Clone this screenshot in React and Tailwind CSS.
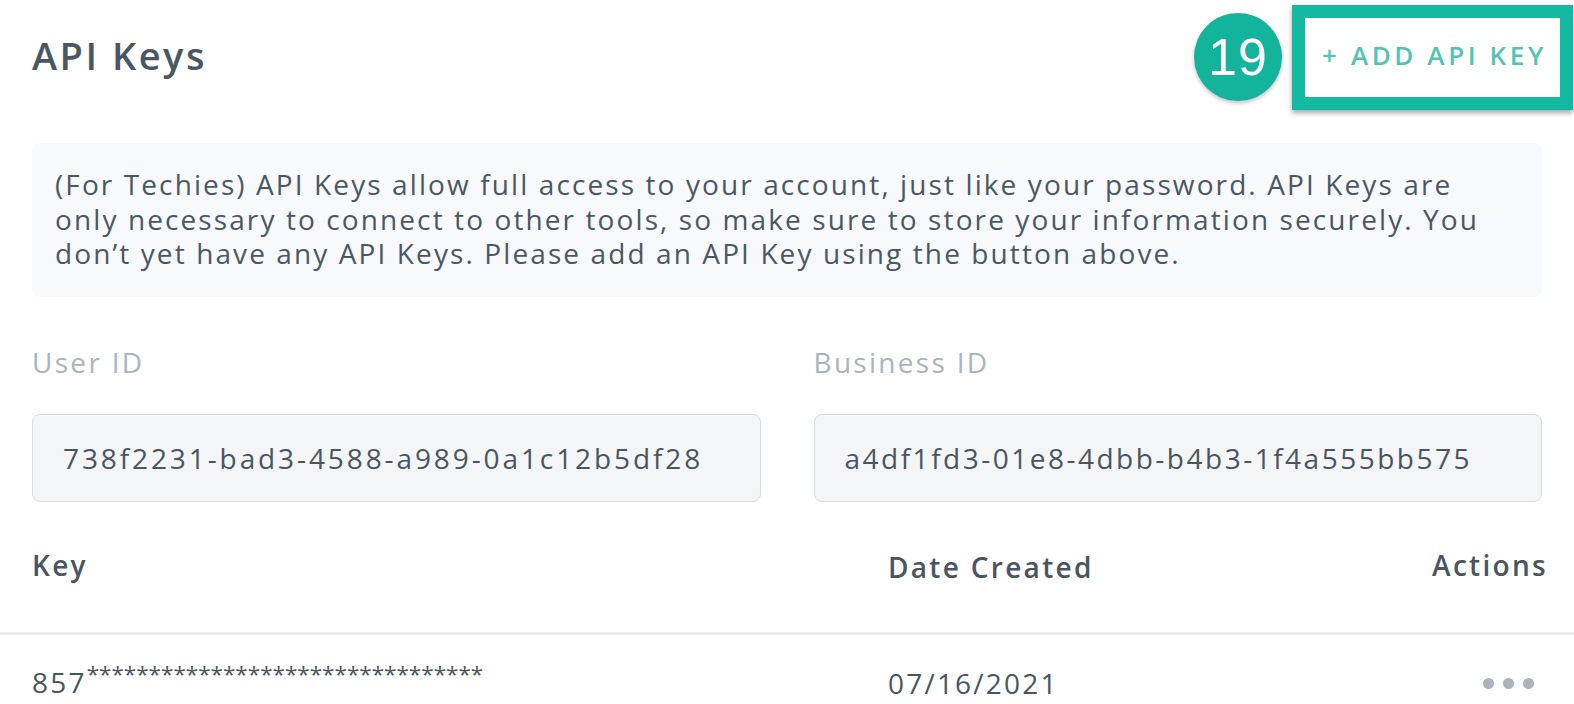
export default function App() {
  const font = { fontFamily: "'Open Sans', Lato, sans-serif" };
  return (
    <div className="w-[1574px] h-[704px] bg-white overflow-hidden text-[#4b5863]" style={font}>
      <div className="px-[32px]">
        <div className="flex items-center justify-between pt-[3px] h-[111px]">
          <h1 className="text-[38px] font-semibold tracking-[2.5px] text-[#4a5762] leading-none -mt-[4px]">API Keys</h1>
          <div className="flex items-center -mr-[31px] h-[105px]">
            <div className="w-[88px] h-[88px] rounded-full bg-[#14b39c] flex items-center justify-center text-white text-[52px] font-medium tracking-[1px] mr-[10px] shadow-[0_2px_4px_rgba(0,0,0,0.25)]" style={{ fontFamily: "'Liberation Sans', Arial, sans-serif" }}>
              19
            </div>
            <div className="h-[105px] w-[281px] border-[13px] border-[#13b9a0] bg-white flex items-center justify-center pl-[4px] shadow-[0_3px_5px_rgba(0,0,0,0.35)]">
              <span className="text-[#55c4af] text-[26px] font-semibold tracking-[3.6px] -mt-[4px] whitespace-nowrap">+ ADD API KEY</span>
            </div>
          </div>
        </div>

        <div className="mt-[32px] bg-[#f7f9fc] rounded-[8px] h-[154px] px-[23px] pt-[24px] text-[28px] leading-[34.5px] tracking-[2.1px] text-[#4b5863] whitespace-nowrap">
          (For Techies) API Keys allow full access to your account, just like your password. API Keys are
          <br />
          only necessary to connect to other tools, so make sure to store your information securely. You
          <br />
          don’t yet have any API Keys. Please add an API Key using the button above.
        </div>

        <div className="grid grid-cols-2 gap-x-[53px] mt-[46px]">
          <div>
            <div className="text-[28px] leading-[38px] tracking-[2.3px] text-[#aab4bd]">User ID</div>
            <div className="mt-[33px] h-[88px] rounded-[8px] border-[1.5px] border-[#d8dde1] bg-[#f4f5f7] flex items-center px-[30px] text-[28px] tracking-[2.9px] text-[#4a5560] whitespace-nowrap">
              738f2231-bad3-4588-a989-0a1c12b5df28
            </div>
          </div>
          <div>
            <div className="text-[28px] leading-[38px] tracking-[2.3px] text-[#aab4bd]">Business ID</div>
            <div className="mt-[33px] h-[88px] rounded-[8px] border-[1.5px] border-[#d8dde1] bg-[#f4f5f7] flex items-center px-[30px] text-[28px] tracking-[2.5px] text-[#4a5560] whitespace-nowrap">
              a4df1fd3-01e8-4dbb-b4b3-1f4a555bb575
            </div>
          </div>
        </div>

        <div className="mt-[30px] flex items-center h-[66px] text-[28px] font-semibold tracking-[2.3px] text-[#4a5560]">
          <div className="w-[856px]">Key</div>
          <div className="flex-1 mt-[4px]">Date Created</div>
          <div className="-mr-[6px]">Actions</div>
        </div>
      </div>
      <div className="mt-[34px] h-[3px] bg-[#ececec]"></div>
      <div className="px-[32px] flex items-center h-[98px] text-[28px] text-[#4a5560] -mt-[1px]">
        <div className="w-[856px] -mt-[2px] flex items-start whitespace-nowrap">
          <span className="tracking-[2.2px]">857</span>
          <span className="text-[22.5px] leading-[30px] -mt-[2px]">********************************</span>
        </div>
        <div className="flex-1 tracking-[2.2px]">07/16/2021</div>
        <div className="flex gap-[9px] mr-[8px]">
          <span className="w-[11px] h-[11px] rounded-full bg-[#a9b4bd]"></span>
          <span className="w-[11px] h-[11px] rounded-full bg-[#a9b4bd]"></span>
          <span className="w-[11px] h-[11px] rounded-full bg-[#a9b4bd]"></span>
        </div>
      </div>
    </div>
  );
}
